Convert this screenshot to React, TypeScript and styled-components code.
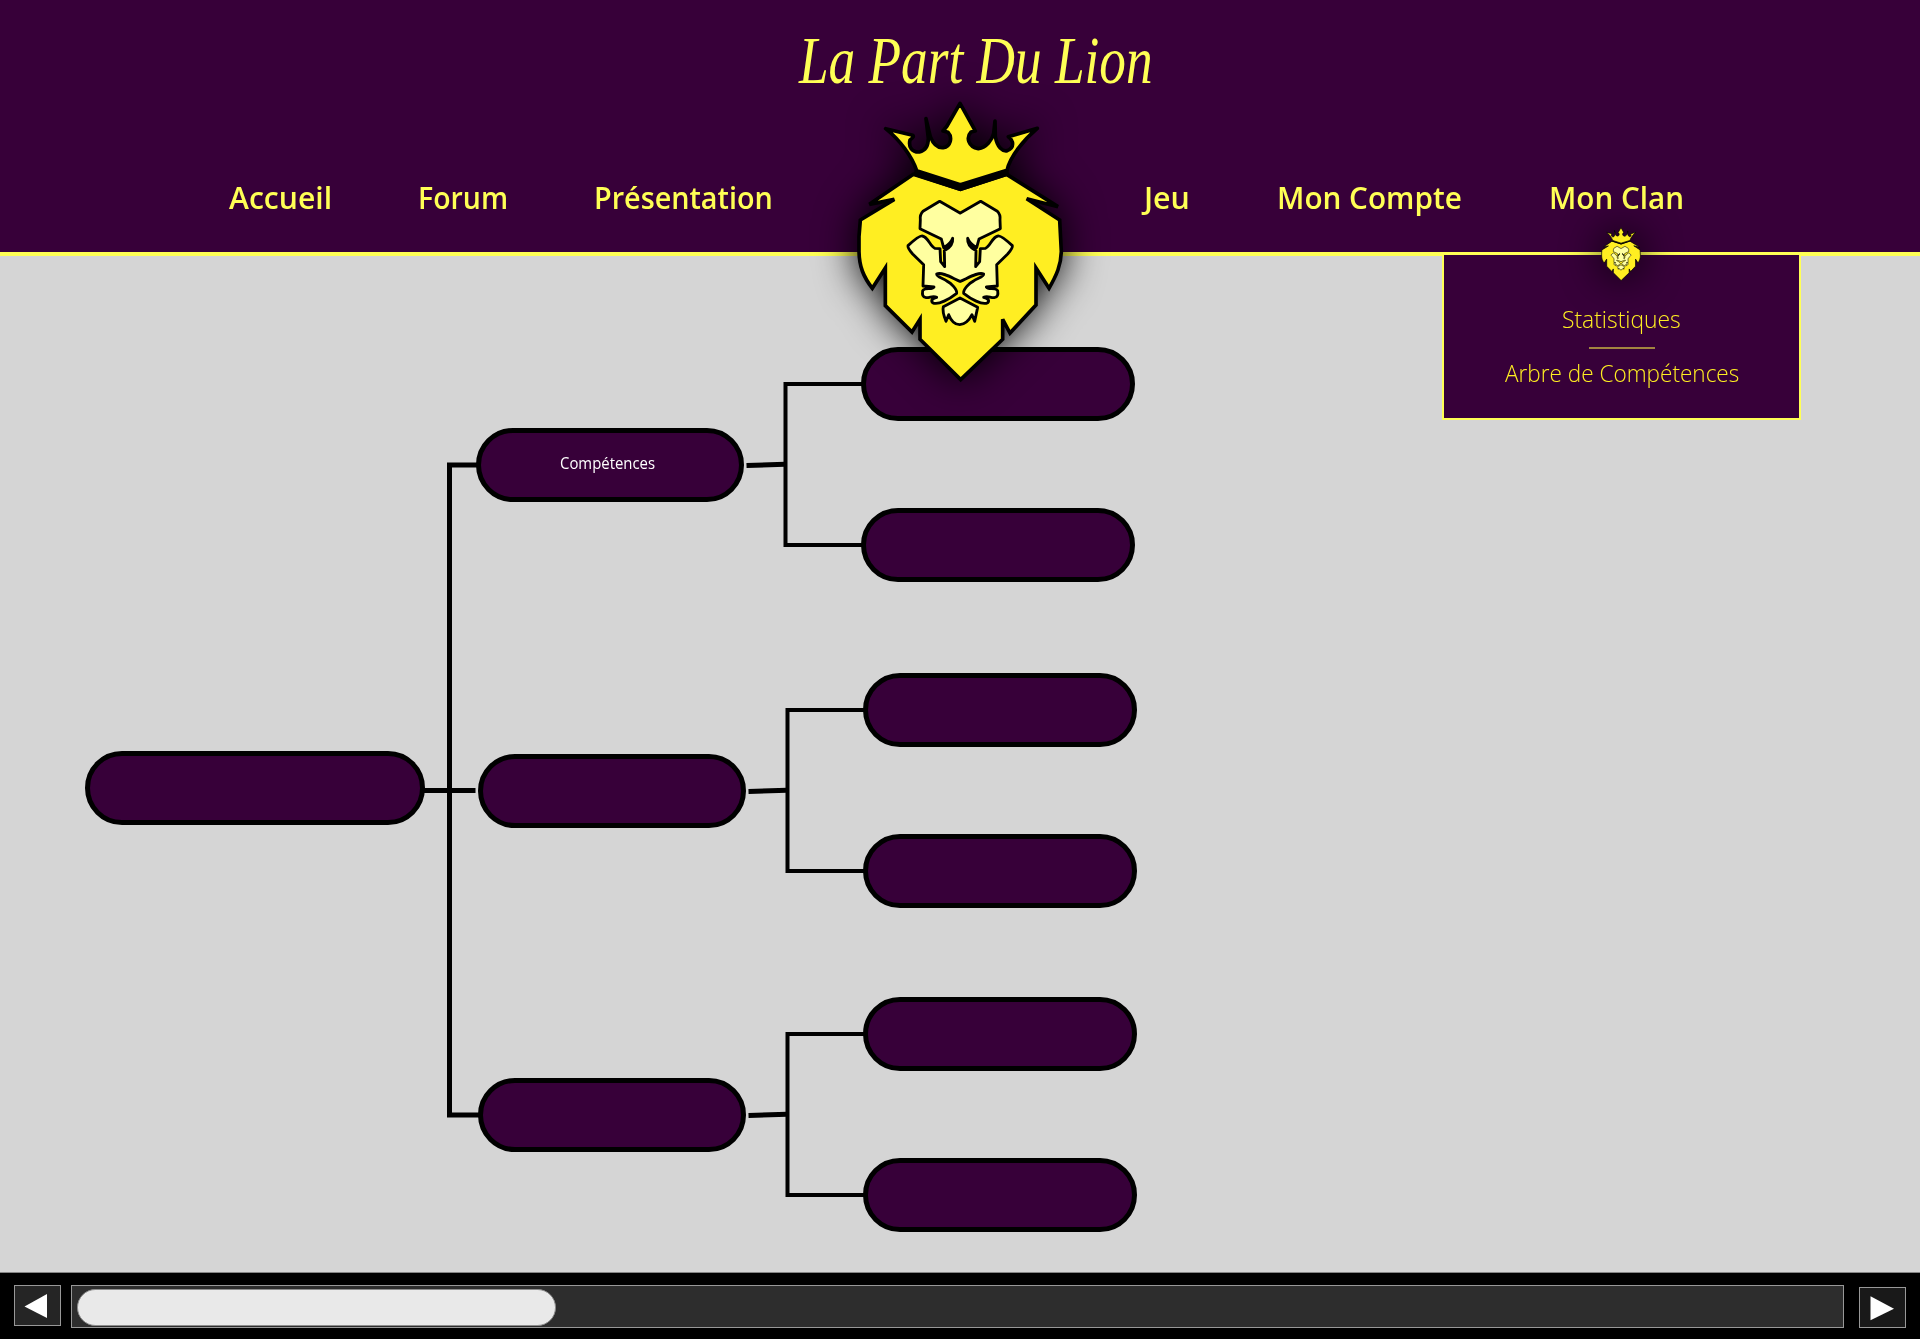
import React, { useLayoutEffect, useRef, useState } from "react";
import styled, { createGlobalStyle } from "styled-components";

const purple = "#370039";
const yellow = "#ffff55";
const gold = "#ffee22";

const GlobalStyle = createGlobalStyle`
  body { margin: 0; background: #d5d5d5; font-family: "Open Sans", "Noto Sans", sans-serif; }
  *, *::before, *::after { box-sizing: border-box; }
`;

const Page = styled.div`
  display: flex;
  flex-direction: column;
  height: 1339px;
  width: 1920px;
  overflow: hidden;
  background: #d5d5d5;
`;

const Header = styled.header`
  position: relative;
  z-index: 2;
  flex: none;
  display: flex;
  flex-direction: column;
  align-items: center;
  height: 256px;
  background: ${purple};
  border-bottom: 4px solid ${yellow};
`;

const Title = styled.h1`
  margin: 0;
  padding: 24px 0 0 31px;
  height: 177px;
  font: italic 400 68px/72px "Liberation Serif", serif;
  color: ${yellow};
`;

const Nav = styled.nav`
  display: flex;
  justify-content: space-between;
  width: 100%;
  padding: 0 236px 0 229px;
  font-size: 31px;
  font-weight: 600;
  line-height: 40px;
  color: ${yellow};
`;

const NavGroup = styled.div<{ $gap: number }>`
  display: flex;
  gap: ${(p) => p.$gap}px;
`;

const NavItem = styled.div`
  position: relative;
`;

const FitBox = styled.span<{ $width: number }>`
  display: block;
  width: ${(p) => p.$width}px;
  white-space: nowrap;
`;

const FitText = styled.span`
  display: inline-block;
  transform-origin: 0 50%;
`;

function Fit({ width, children }: { width: number; children: React.ReactNode }) {
  const ref = useRef<HTMLSpanElement>(null);
  const [scale, setScale] = useState(1);
  useLayoutEffect(() => {
    if (ref.current) setScale(width / ref.current.offsetWidth);
  }, [width]);
  return (
    <FitBox $width={width}>
      <FitText ref={ref} style={{ transform: `scaleX(${scale})` }}>
        {children}
      </FitText>
    </FitBox>
  );
}

const Crest = styled.svg<{ $left: number; $top: number; $width: number }>`
  position: absolute;
  left: ${(p) => p.$left}px;
  top: ${(p) => p.$top}px;
  width: ${(p) => p.$width}px;
  height: auto;
  overflow: visible;
  filter: drop-shadow(0 0 20px #000);
`;

const HALF_FACE =
  "M181 57 L180 57 L119 22 L69 52 Q59 62 61 78 L60 104 L124 135 L131 161 Q152 150 158 133 Q160 157 133 170 L134 218 L122 203 L120 164 L105 163 C90 158 85 129 67 126 Q58 124 24 155 Q22 162 38 180 L71 212 L69 276 L102 279 C96 289 76 278 68 290 C66 302 68 310 78 311 C90 312 98 304 110 310 C100 313 90 318 98 326 C114 335 150 314 170 298 C172 286 152 266 142 262 C130 252 110 250 110 240 C125 232 160 254 180 262 L181 262";

function Lion({ left, top, width }: { left: number; top: number; width: number }) {
  return (
    <Crest viewBox="0 0 720 930" $left={left} $top={top} $width={width} strokeLinejoin="miter" stroke="#000">
      <path
        fill={gold}
        strokeWidth="11"
        d="M361 298 L220 253 L88 343 L163 328 L61 390 L57 440 V485 C58 530 70 560 97 595 L136 534 V647 L216 726 L240 688 V748 L362 869 L488 748 V688 L510 729 L588 645 V534 L627 595 C650 555 663 525 664 485 L659 390 L560 326 L654 350 L500 253 Z"
      />
      <path fill="none" strokeWidth="20" d="M222 247 L361 293 L506 246" />
      <path
        fill={gold}
        strokeWidth="11"
        strokeLinejoin="round"
        d="M230 242 C216 200 180 150 137 116 L218 136 Q224 140 210 150 C205 170 215 187 238 186 C255 182 265 168 265 145 L258 86 L271 140 C280 163 292 175 310 173 C332 170 338 142 324 127 L309 123 L321 108 L360 40 L398 108 L406 123 L393 126 C378 142 384 170 415 176 C440 172 456 150 461 130 L465 93 L466 140 C472 172 487 185 502 182 C524 173 521 152 505 140 L592 115 C550 150 510 200 501 241 L361 284 Z"
      />
      <g transform="translate(180 312)" strokeWidth="8.5" strokeLinejoin="round" fill="#ffffa0">
        <path d={HALF_FACE} />
        <path d={HALF_FACE} transform="matrix(-1 0 0 1 361 0)" />
        <path d="M180 312 L130 338 Q126 352 138 382 L146 362 Q158 392 179 392 Q202 390 216 362 L224 382 L233 340 Z" />
        <path fill="#000" strokeWidth="2" d="M130 160 Q152 152 159 131 Q162 155 134 170 Z M231 160 Q209 152 202 131 Q199 155 227 170 Z" />
      </g>
    </Crest>
  );
}

const Dropdown = styled.div`
  position: absolute;
  left: 1442px;
  top: 255px;
  width: 359px;
  height: 165px;
  padding-top: 46px;
  display: flex;
  flex-direction: column;
  align-items: center;
  border: 2px solid ${yellow};
  border-top: 0;
  background: ${purple};
  color: ${gold};
  font-size: 24px;
  font-weight: 300;
  line-height: 36px;
`;

const Separator = styled.div`
  width: 66px;
  height: 2px;
  margin: 10px 0 6px;
  background: #a28440;
`;

const Canvas = styled.main`
  position: relative;
  flex: 1;
`;

const Links = styled.svg`
  position: absolute;
  inset: 0;
  width: 1200px;
  height: 1016px;
`;

const Node = styled.div<{ $x: number; $y: number; $w: number }>`
  position: absolute;
  left: ${(p) => p.$x}px;
  top: ${(p) => p.$y - 256}px;
  width: ${(p) => p.$w}px;
  height: 74px;
  display: flex;
  justify-content: center;
  padding: 16px 5px 0 0;
  border: 5px solid #000;
  border-radius: 37px;
  background: ${purple};
  color: #fff;
  font-size: 16px;
  line-height: 28px;
`;

const ScrollBar = styled.footer`
  position: relative;
  z-index: 3;
  flex: none;
  display: flex;
  align-items: flex-start;
  height: 67px;
  padding: 12px 14px 0;
  border-top: 1px solid #858585;
  background: #000;
`;

const ArrowButton = styled.div<{ $bg: string; $top: number }>`
  display: flex;
  align-items: center;
  justify-content: center;
  width: 47px;
  height: 41px;
  margin-top: ${(p) => p.$top}px;
  border: 1px solid #989898;
  background: ${(p) => p.$bg};
`;

const Track = styled.div`
  width: 1773px;
  height: 43px;
  margin: 0 15px 0 10px;
  padding: 3px 5px;
  border: 1px solid #989898;
  background: #2d2d2d;
`;

const Thumb = styled.div`
  width: 479px;
  height: 37px;
  border: 1px solid #8c8c8c;
  border-radius: 19px;
  background: #e9e9e9;
`;

const branches = [
  { x: 0, y: 0, label: "Compétences" },
  { x: 2, y: 326, label: "" },
  { x: 2, y: 650, label: "" },
];

export default function App() {
  return (
    <Page>
      <GlobalStyle />
      <Header>
        <Title>
          <Fit width={354}>La Part Du Lion</Fit>
        </Title>
        <Nav>
          <NavGroup $gap={86}>
            <NavItem><Fit width={103}>Accueil</Fit></NavItem>
            <NavItem><Fit width={90}>Forum</Fit></NavItem>
            <NavItem><Fit width={179}>Présentation</Fit></NavItem>
          </NavGroup>
          <NavGroup $gap={87}>
            <NavItem><Fit width={46}>Jeu</Fit></NavItem>
            <NavItem><Fit width={185}>Mon Compte</Fit></NavItem>
            <NavItem><Fit width={135}>Mon Clan</Fit></NavItem>
          </NavGroup>
        </Nav>
        <Dropdown>
          <Fit width={119}>Statistiques</Fit>
          <Separator />
          <Fit width={234}>Arbre de Compétences</Fit>
        </Dropdown>
        <Lion left={840} top={90} width={240} />
        <Lion left={1598.3} top={224.7} width={46} />
      </Header>
      <Canvas>
        <Links viewBox="0 256 1200 1016" fill="none" stroke="#000" strokeWidth="5">
          <path d="M478 465 H449.5 V1115 H480" />
          <path d="M424 790.5 H475.5" />
          {branches.map((b) => (
            <g key={b.y} transform={`translate(${b.x} ${b.y})`}>
              <path d="M746.5 465.5 L785 464.3" />
              <path strokeWidth="4" d="M863 384 H785.5 V545 H863" />
            </g>
          ))}
        </Links>
        <Node $x={85} $y={751} $w={340} />
        {branches.map((b) => (
          <React.Fragment key={b.y}>
            <Node $x={476 + b.x} $y={428 + b.y} $w={268}>
              {b.label && <Fit width={95}>{b.label}</Fit>}
            </Node>
            <Node $x={861 + b.x} $y={347 + b.y} $w={274} />
            <Node $x={861 + b.x} $y={508 + b.y} $w={274} />
          </React.Fragment>
        ))}
      </Canvas>
      <ScrollBar>
        <ArrowButton $bg="#252525" $top={0}>
          <svg width="45" height="39"><path fill="#fff" d="M9.5 20.5 L32 8 V32 Z" /></svg>
        </ArrowButton>
        <Track><Thumb /></Track>
        <ArrowButton $bg="#191919" $top={2}>
          <svg width="45" height="39"><path fill="#fff" d="M34 20.8 L10.5 8.3 V32.3 Z" /></svg>
        </ArrowButton>
      </ScrollBar>
    </Page>
  );
}
